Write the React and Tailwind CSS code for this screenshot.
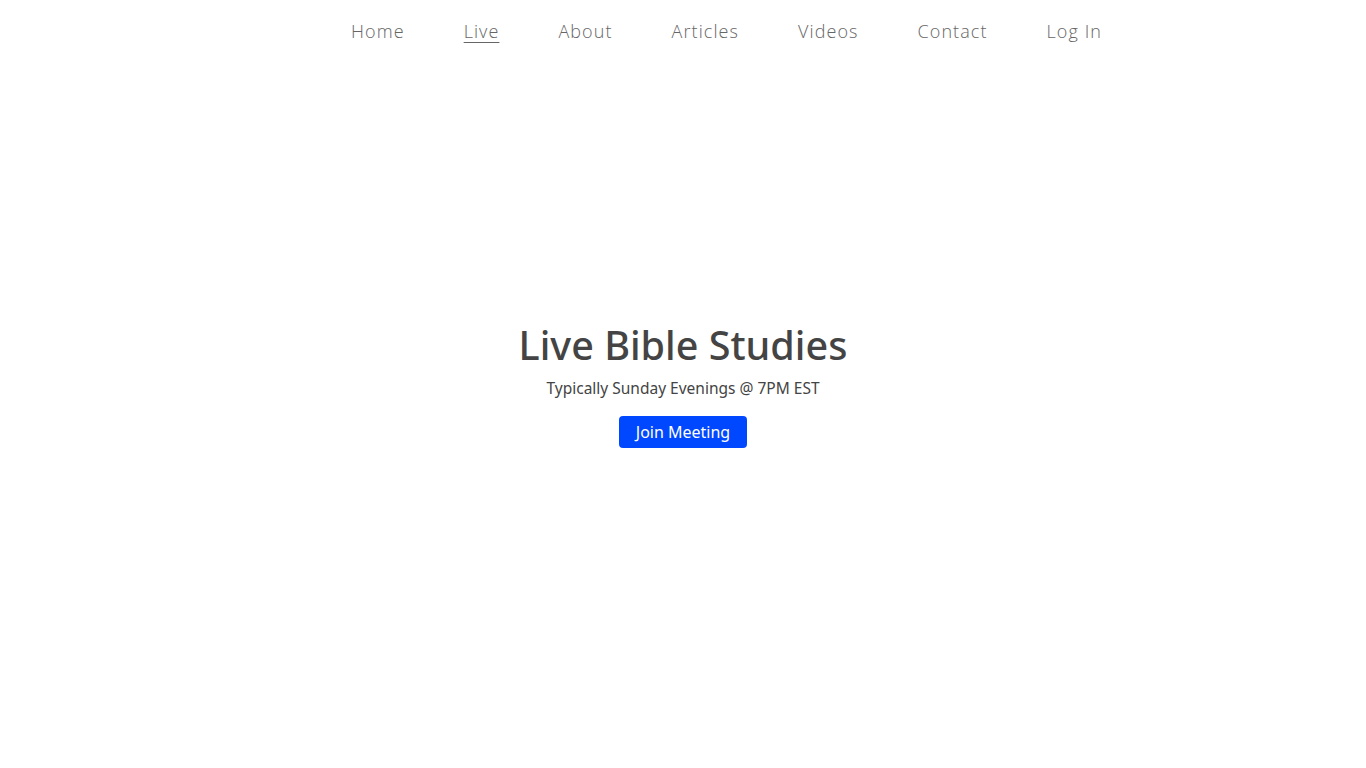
import React from 'react';

const links = ['Home', 'Live', 'About', 'Articles', 'Videos', 'Contact', 'Log In'];

const App = () => {
  return (
    <div className="min-h-screen bg-white flex flex-col" style={{ fontFamily: '"Open Sans", "Noto Sans", sans-serif' }}>
      {/* Nav */}
      <nav className="flex justify-end pr-[264px] pt-[19px] gap-[59px]">
        {links.map((l) => (
          <a
            key={l}
            href="#"
            className={`text-[18px] leading-[24px] font-light tracking-[0.06em] text-[#666] ${l === 'Live' ? 'underline underline-offset-4' : ''}`}
          >
            {l}
          </a>
        ))}
      </nav>

      {/* Hero */}
      <div className="flex flex-col items-center pt-[275px]" style={{ fontFamily: '"Noto Sans", "Open Sans", sans-serif' }}>
        <h1 className="text-[39.5px] leading-[54px] font-medium text-[#444]">Live Bible Studies</h1>
        <p className="text-[15.5px] leading-[22px] text-[#444] mt-[5px]">Typically Sunday Evenings @ 7PM EST</p>
        <button className="mt-[17px] w-[128px] h-[32px] rounded-[4px] bg-[#0048ff] text-white text-[16px]">
          Join Meeting
        </button>
      </div>
    </div>
  );
};

export default App;
